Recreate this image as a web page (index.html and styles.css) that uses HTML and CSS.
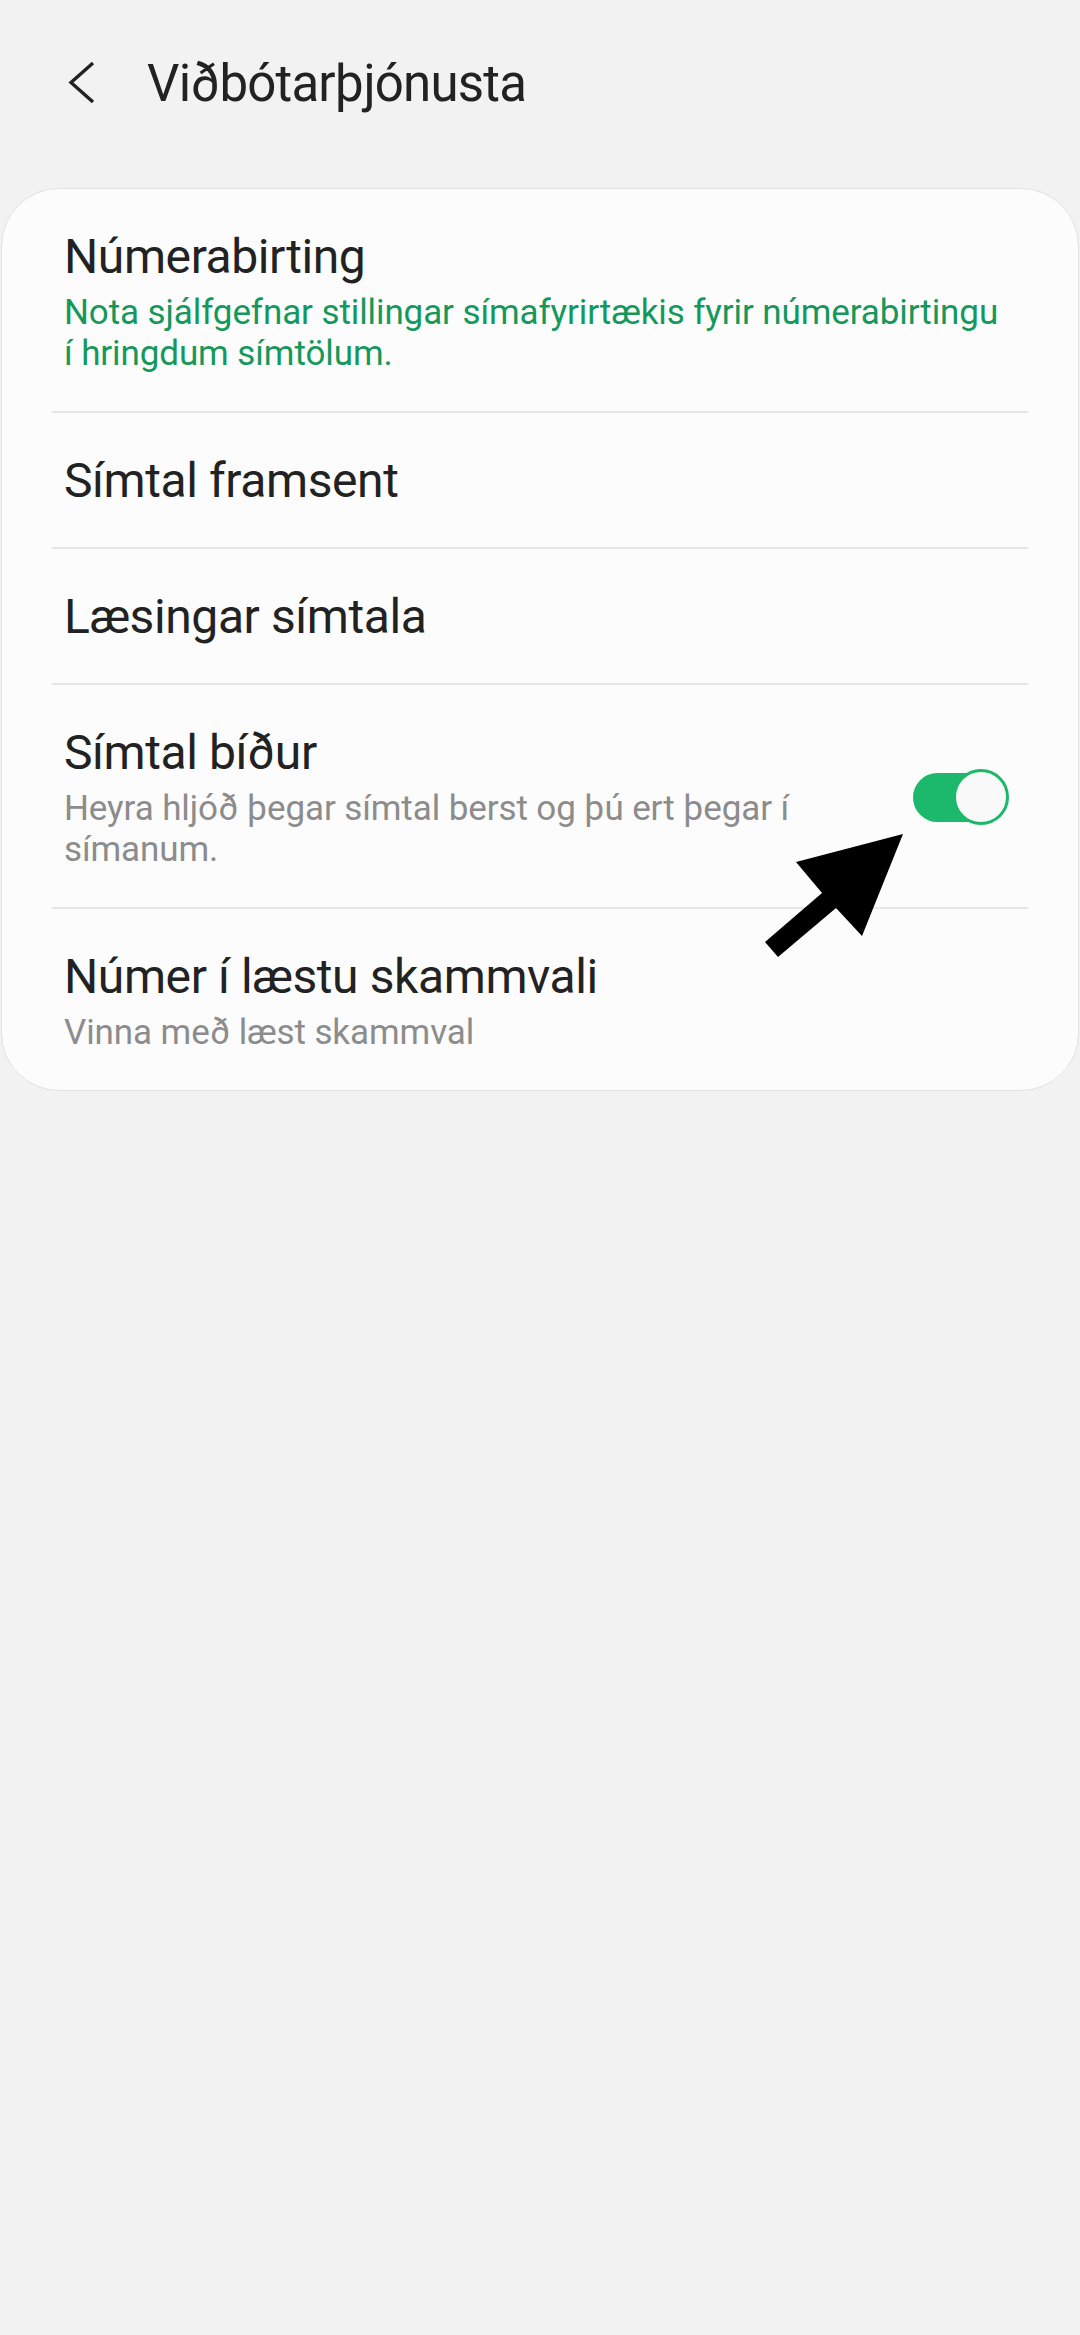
FILE: index.html
```html
<!DOCTYPE html>
<html lang="is">
<head>
    <meta charset="UTF-8">
    <meta name="viewport" content="width=device-width, initial-scale=1.0">
    <title>Viðbótarþjónusta</title>
    <link rel="stylesheet" href="styles.css">
</head>
<body>
    <div class="header">
        <svg class="back" width="32" height="44" viewBox="0 0 32 44">
            <polyline points="27,2 5,21.5 27,41" fill="none" stroke="#222" stroke-width="3.4"/>
        </svg>
        <h1>Viðbótarþjónusta</h1>
    </div>

    <div class="card">
        <div class="row">
            <div class="text">
                <div class="title">Númerabirting</div>
                <div class="sub green">Nota sjálfgefnar stillingar símafyrirtækis fyrir númerabirtingu í hringdum símtölum.</div>
            </div>
        </div>
        <div class="row">
            <div class="text">
                <div class="title">Símtal framsent</div>
            </div>
        </div>
        <div class="row">
            <div class="text">
                <div class="title">Læsingar símtala</div>
            </div>
        </div>
        <div class="row">
            <div class="text">
                <div class="title">Símtal bíður</div>
                <div class="sub">Heyra hljóð þegar símtal berst og þú ert þegar í símanum.</div>
            </div>
            <div class="switch on">
                <div class="track"></div>
                <div class="thumb"></div>
            </div>
        </div>
        <div class="row">
            <div class="text">
                <div class="title">Númer í læstu skammvali</div>
                <div class="sub">Vinna með læst skammval</div>
            </div>
        </div>
    </div>

    <!-- annotation arrow pointing at the switch -->
    <svg class="pointer" width="150" height="130" viewBox="0 0 150 130">
        <polygon points="143,4 36,32 62,63 5,112 18,127 76,78 102,106" fill="#000"/>
    </svg>
</body>
</html>
```

FILE: styles.css
```css
body {
    margin: 0;
    background-color: #f2f2f2;
    font-family: Roboto, "Noto Sans", sans-serif;
    color: #222;
}
.header {
    display: flex;
    align-items: center;
    height: 166px;
    padding-left: 66px;
}
.back {
    display: block;
}
h1 {
    margin: 0 0 0 49px;
    font-size: 51px;
    font-weight: 400;
    letter-spacing: -0.8px;
    color: #222;
}
.card {
    margin: 22px 1px 0;
    padding: 0 50px;
    background-color: #fcfcfc;
    border: 1px solid #e2e2e2;
    border-radius: 58px;
}
.row {
    display: flex;
    align-items: center;
    padding: 39px 0 37px 12px;
    border-top: 2px solid #e6e6e6;
}
.row:first-child {
    border-top: none;
}
.text {
    flex: 1;
    padding-right: 28px;
}
.title {
    font-size: 48px;
    line-height: 58px;
    letter-spacing: -0.4px;
    color: #222;
}
.sub {
    margin-top: 6px;
    font-size: 35px;
    line-height: 41px;
    letter-spacing: -0.1px;
    color: #8c8c8c;
}
.sub.green {
    color: #14985b;
}
.switch {
    position: relative;
    width: 96px;
    height: 56px;
    margin-right: 19px;
    flex-shrink: 0;
}
.track {
    position: absolute;
    left: 0;
    top: 4px;
    width: 80px;
    height: 49px;
    border-radius: 25px;
    background-color: #1cb86b;
}
.thumb {
    position: absolute;
    right: 0;
    top: 0;
    width: 50px;
    height: 50px;
    border-radius: 50%;
    border: 3px solid #1cb86b;
    background-color: #f9f9f9;
}
.pointer {
    position: absolute;
    left: 760px;
    top: 830px;
}
```
